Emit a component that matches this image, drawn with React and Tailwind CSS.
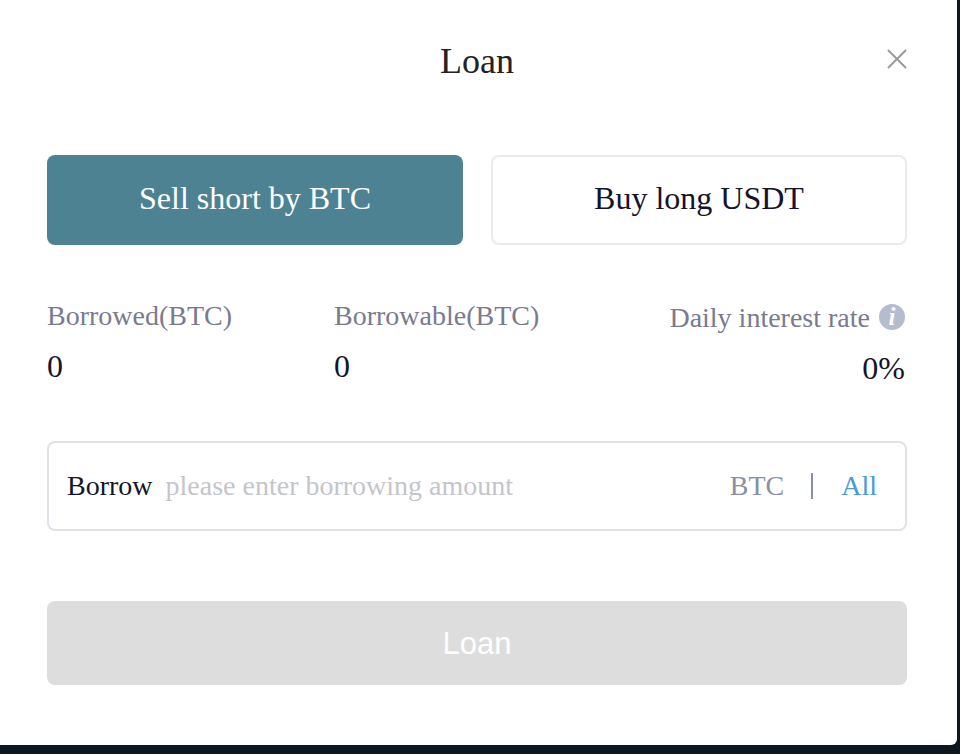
import React from 'react';

function Stat({ label, value, className = '' }) {
  return (
    <div className={className}>
      <div className="text-[28px] leading-[30px] text-[#7a7a8f]">{label}</div>
      <div className="mt-[20px] text-[32px] leading-[30px] text-[#14142b]">{value}</div>
    </div>
  );
}

export default function App() {
  return (
    <div className="h-[754px] w-[960px] overflow-hidden bg-[#0d1720] font-['Liberation_Serif',serif]">
      <div className="h-[745px] w-[957px] rounded-br-[6px] bg-white pl-[47px] pr-[50px]">
        <div className="relative flex h-[123px] items-center justify-center pb-[1px]">
          <h1 className="text-[36px] font-normal leading-none text-[#222222]">Loan</h1>
          <svg
            className="absolute right-0 top-[49px] h-[20px] w-[20px]"
            viewBox="0 0 20 20"
            fill="none"
            stroke="#999aa1"
            strokeWidth="2"
          >
            <path d="M1 1 L19 19 M19 1 L1 19" />
          </svg>
        </div>

        <div className="mt-[32px] flex gap-[28px]">
          <button className="h-[90px] w-[416px] rounded-[8px] bg-[#4d8293] pb-[4px] text-[32px] text-white">
            Sell short by BTC
          </button>
          <button className="h-[90px] flex-1 rounded-[8px] border-2 border-[#e8ecf0] bg-white pb-[4px] text-[32px] text-[#14142b]">
            Buy long USDT
          </button>
        </div>

        <div className="mt-[56px] flex">
          <Stat className="w-[287px]" label="Borrowed(BTC)" value="0" />
          <Stat label="Borrowable(BTC)" value="0" />
          <div className="ml-auto flex flex-col items-end pr-[2px]">
            <div className="flex items-center text-[28px] leading-[30px] text-[#7a7a8f]">
              <span className="pt-[2px]">Daily interest rate</span>
              <span className="ml-[9px] flex h-[26px] w-[26px] items-center justify-center rounded-full bg-[#b5bccd] text-[25px] font-bold italic text-white">
                i
              </span>
            </div>
            <div className="mt-[20px] text-[32px] leading-[30px] text-[#14142b]">0%</div>
          </div>
        </div>

        <div className="mt-[58px] flex h-[90px] items-center rounded-[8px] border-2 border-[#e1e2e8] pl-[18px] pr-[28px] text-[28px]">
          <span className="text-[#14142b]">Borrow</span>
          <span className="ml-[13px] text-[#c4c5cc]">please enter borrowing amount</span>
          <span className="ml-auto text-[#8a8fa3]">BTC</span>
          <span className="ml-[27px] mr-[28px] h-[26px] w-[2px] bg-[#8a8fa3]" />
          <span className="text-[#4a9bdc]">All</span>
        </div>

        <button className="mt-[70px] h-[84px] w-full rounded-[8px] bg-[#dddddd] pt-[3px] font-['Liberation_Sans',sans-serif] text-[31px] text-white">
          Loan
        </button>
      </div>
    </div>
  );
}
